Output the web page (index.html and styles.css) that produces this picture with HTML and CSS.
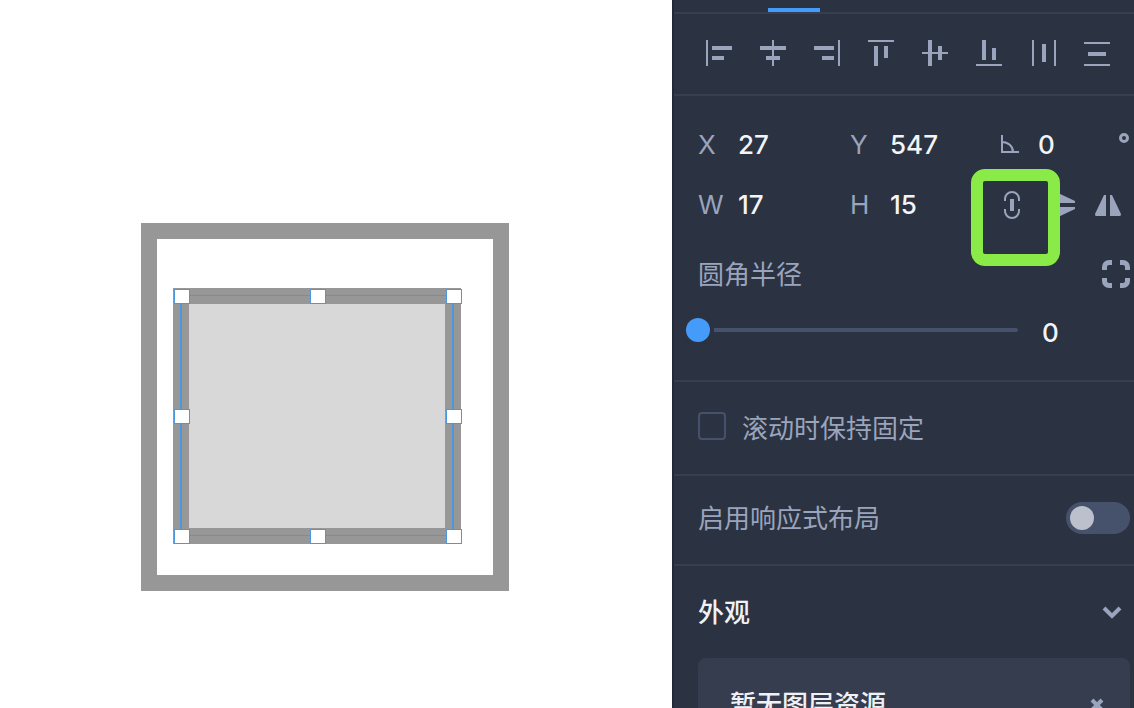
FILE: index.html
```html
<!DOCTYPE html>
<html lang="zh-CN">
<head>
<meta charset="utf-8">
<title>设计</title>
<link rel="stylesheet" href="styles.css">
</head>
<body>
<div class="app">
  <main class="canvas">
    <div class="frame"></div>
    <div class="shape"></div>
    <div class="selection">
      <i class="handle nw"></i><i class="handle n"></i><i class="handle ne"></i>
      <i class="handle w"></i><i class="handle e"></i>
      <i class="handle sw"></i><i class="handle s"></i><i class="handle se"></i>
    </div>
  </main>
  <aside class="panel">
    <div class="tabs"><span class="tab-mark"></span></div>
    <div class="align">
      <button aria-label="左对齐"><svg viewBox="0 0 26 26"><path d="M0 0h2v26H0zM6 6h20v4H6zM6 16h12v4H6z"/></svg></button>
      <button aria-label="水平居中"><svg viewBox="0 0 26 26"><path d="M12 0h2v26h-2zM0 6h26v4H0zM6 16h14v4H6z"/></svg></button>
      <button aria-label="右对齐"><svg viewBox="0 0 26 26"><path d="M24 0h2v26h-2zM0 6h20v4H0zM8 16h12v4H8z"/></svg></button>
      <button aria-label="顶部对齐"><svg viewBox="0 0 26 26"><path d="M0 0h26v2H0zM6 6h4v20H6zM16 6h4v12h-4z"/></svg></button>
      <button aria-label="垂直居中"><svg viewBox="0 0 26 26"><path d="M0 12h26v2H0zM6 0h4v26H6zM16 6h4v14h-4z"/></svg></button>
      <button aria-label="底部对齐"><svg viewBox="0 0 26 26"><path d="M0 24h26v2H0zM6 0h4v20H6zM16 8h4v12h-4z"/></svg></button>
      <button aria-label="水平分布"><svg viewBox="0 0 26 26"><path d="M2 0h2v26H2zM12 4h4v18h-4zM24 0h2v26h-2z"/></svg></button>
      <button aria-label="垂直分布"><svg viewBox="0 0 26 26"><path d="M0 2h26v2H0zM4 12h18v4H4zM0 24h26v2H0z"/></svg></button>
    </div>

    <section class="transform">
      <div class="fields">
        <div class="field"><label for="x">X</label><input id="x" type="text" value="27"></div>
        <div class="field"><label for="y">Y</label><input id="y" type="text" value="547"></div>
        <div class="field angle">
          <label for="angle" aria-label="旋转"><svg class="angle-icon" viewBox="0 0 18 18"><path d="M1 0v17h17M1 7c6 0 11 4 11 10"/></svg></label>
          <input id="angle" type="text" value="0"><span class="degree"></span>
        </div>
        <div class="field"><label for="w">W</label><input id="w" type="text" value="17"></div>
        <div class="field"><label for="h">H</label><input id="h" type="text" value="15"></div>
        <div class="tools">
          <button class="lock" aria-label="锁定比例"><svg viewBox="0 0 16 28"><path class="line" d="M1 10V8a7 7 0 0 1 14 0v2M1 18v2a7 7 0 0 0 14 0v-2"/><path d="M6 8h4v12H6z"/></svg></button>
          <button class="flip-v" aria-label="垂直翻转"><svg viewBox="0 0 21 26"><path d="M0 1v10h21V9L2 0Q0-1 0 1zM0 25V15h21v2L2 26Q0 27 0 25z"/></svg></button>
          <button class="flip-h" aria-label="水平翻转"><svg viewBox="0 0 26 21"><path d="M1 21h10V0H9L0 19q0 2 1 2zM25 21H15V0h2l9 19q0 2-1 2z"/></svg></button>
          <span class="highlight"></span>
        </div>
      </div>
      <div class="radius-head">
        <label for="radius">圆角半径</label>
        <button aria-label="独立圆角"><svg class="corners" viewBox="0 0 28 28"><path d="M10 2.500H7A4.500 4.500 0 0 0 2.500 7v3M18 2.500h3A4.500 4.500 0 0 1 25.500 7v3M2.500 18v3A4.500 4.500 0 0 0 7 25.500h3M25.500 18v3a4.500 4.500 0 0 1-4.500 4.500h-3"/></svg></button>
      </div>
      <div class="slider">
        <input id="radius" type="range" min="0" max="100" value="0">
        <input class="amount" type="text" value="0" aria-label="圆角半径数值">
      </div>
    </section>

    <section class="fixed">
      <input id="fixed" class="check" type="checkbox"><label for="fixed">滚动时保持固定</label>
    </section>

    <section class="responsive">
      <label for="responsive">启用响应式布局</label><input id="responsive" class="switch" type="checkbox">
    </section>

    <section class="appearance">
      <div class="title">
        <h2>外观</h2>
        <button aria-label="展开"><svg class="chevron" viewBox="0 0 20 14"><path d="M2 2l8 8 8-8"/></svg></button>
      </div>
      <div class="card">
        <span>暂无图层资源</span>
        <button aria-label="清除"><svg class="cross" viewBox="0 0 14 14"><path d="M2 2l10 10M12 2L2 12"/></svg></button>
      </div>
    </section>
  </aside>
</div>
</body>
</html>
```

FILE: styles.css
```css
* { box-sizing: border-box; }
body {
  margin: 0;
  overflow: hidden;
  background: #fff;
  font: 26px/36px Inter, "Noto Sans CJK SC", sans-serif;
  color: #9aa4bd;
}
button, input { margin: 0; padding: 0; border: 0; background: none; font: inherit; color: inherit; }
button { display: flex; }
svg { display: block; fill: #9aa4bd; }
h2 { margin: 0; font: inherit; font-weight: 500; color: #eff1f5; }

.app { display: flex; height: 100vh; }
.canvas { position: relative; flex: 1; min-width: 0; overflow: hidden; }
.frame, .shape, .selection, .handle { position: absolute; }
.frame { left: 141px; top: 223px; width: 368px; height: 368px; border: 16px solid #979797; }
.shape { left: 173px; top: 288px; width: 288px; height: 256px; border: 16px solid #979797; background: #d8d8d8; }
.selection { left: 180px; top: 295px; width: 274px; height: 241px; border: solid #4a98e0; border-width: 1px 2px; }
.handle { width: 16px; height: 15px; border: 1px solid #4a98e0; background: #fff; }
.nw, .w, .sw { left: -8px; }
.n, .s { left: calc(50% - 7px); }
.ne, .e, .se { right: -10px; }
.nw, .n, .ne { top: -7px; }
.w, .e { top: calc(50% - 7px); }
.sw, .s, .se { bottom: -9px; }

.panel { flex: none; width: 462px; border-left: 2px solid #232938; background: #2b3241; overflow: hidden; }
.tabs { display: flex; align-items: flex-end; height: 14px; padding-left: 94px; border-bottom: 2px solid #363e51; }
.tab-mark { width: 52px; height: 4px; background: #459bf9; }
.align { display: flex; justify-content: space-between; padding: 26px 24px 28px 32px; border-bottom: 2px solid #363e51; }
.align svg { width: 26px; height: 26px; }

section { border-bottom: 2px solid #363e51; padding-left: 24px; padding-right: 4px; }
.transform { padding-top: 19px; padding-bottom: 24px; }
.fields { display: grid; grid-template-columns: 152px 152px 1fr; grid-auto-rows: 60px; }
.field { display: flex; align-items: center; min-width: 0; }
.field label { width: 40px; flex: none; }
.field input { width: 80px; min-width: 0; color: #f3f4f7; font-weight: 500; }
.field.angle label { width: 36px; padding-bottom: 2px; }
.angle-icon { width: 18px; height: 18px; margin-left: -1px; fill: none; stroke: #9aa4bd; stroke-width: 2; }
.degree { width: 10px; height: 10px; margin: 0 1px 14px auto; border: 3px solid #9aa4bd; border-radius: 50%; }
.tools { position: relative; display: flex; align-items: center; padding-left: 2px; }
.lock svg { width: 16px; height: 28px; }
.line { fill: none; stroke: #9aa4bd; stroke-width: 2; }
.flip-v { margin-left: 34px; }
.flip-v svg { width: 21px; height: 26px; }
.flip-h { margin-left: 20px; }
.flip-h svg { width: 26px; height: 21px; }
.highlight { position: absolute; left: -31px; top: -6px; width: 89px; height: 97px; border: 12px solid #8aea48; border-radius: 14px; }

.radius-head { display: flex; align-items: center; justify-content: space-between; height: 78px; }
.radius-head label { padding-top: 2px; }
.corners { width: 28px; height: 28px; fill: none; stroke: #9aa4bd; stroke-width: 5; }
.slider { display: flex; align-items: flex-start; height: 43px; margin-left: -12px; padding-top: 5px; }
.slider input[type="range"] { flex: none; width: 332px; height: 24px; appearance: none; }
.slider input::-webkit-slider-runnable-track { height: 4px; border-radius: 2px; background: #46516b; }
.slider input::-webkit-slider-thumb {
  appearance: none; width: 24px; height: 24px; margin-top: -10px;
  border-radius: 50%; background: #459bf9; box-shadow: 0 0 0 4px #2b3241;
}
.amount { width: 60px; height: 30px; margin-left: 24px; color: #f3f4f7; font-weight: 500; }

.fixed, .responsive { display: flex; align-items: flex-start; line-height: 34px; }
.fixed { gap: 16px; height: 94px; padding-top: 30px; }
.check { appearance: none; width: 28px; height: 28px; border: 2px solid #46516b; border-radius: 4px; }
.responsive { justify-content: space-between; height: 90px; padding-top: 26px; }
.switch { display: flex; align-items: center; appearance: none; width: 64px; height: 32px; padding: 4px; border-radius: 16px; background: #46516b; }
.switch::before { content: ""; width: 24px; height: 24px; border-radius: 50%; background: #bcc0cc; }
.appearance { border: 0; }
.title { display: flex; align-items: center; justify-content: space-between; height: 92px; padding-top: 2px; padding-right: 8px; }
.chevron { width: 20px; height: 14px; fill: none; stroke: #9aa4bd; stroke-width: 4; }
.card { display: flex; align-items: center; justify-content: space-between; height: 94px; padding: 0 26px 0 32px; border-radius: 8px; background: #353d4f; color: #eff1f5; font-weight: 500; }
.cross { width: 14px; height: 14px; stroke: #9aa4bd; stroke-width: 4; }
```
